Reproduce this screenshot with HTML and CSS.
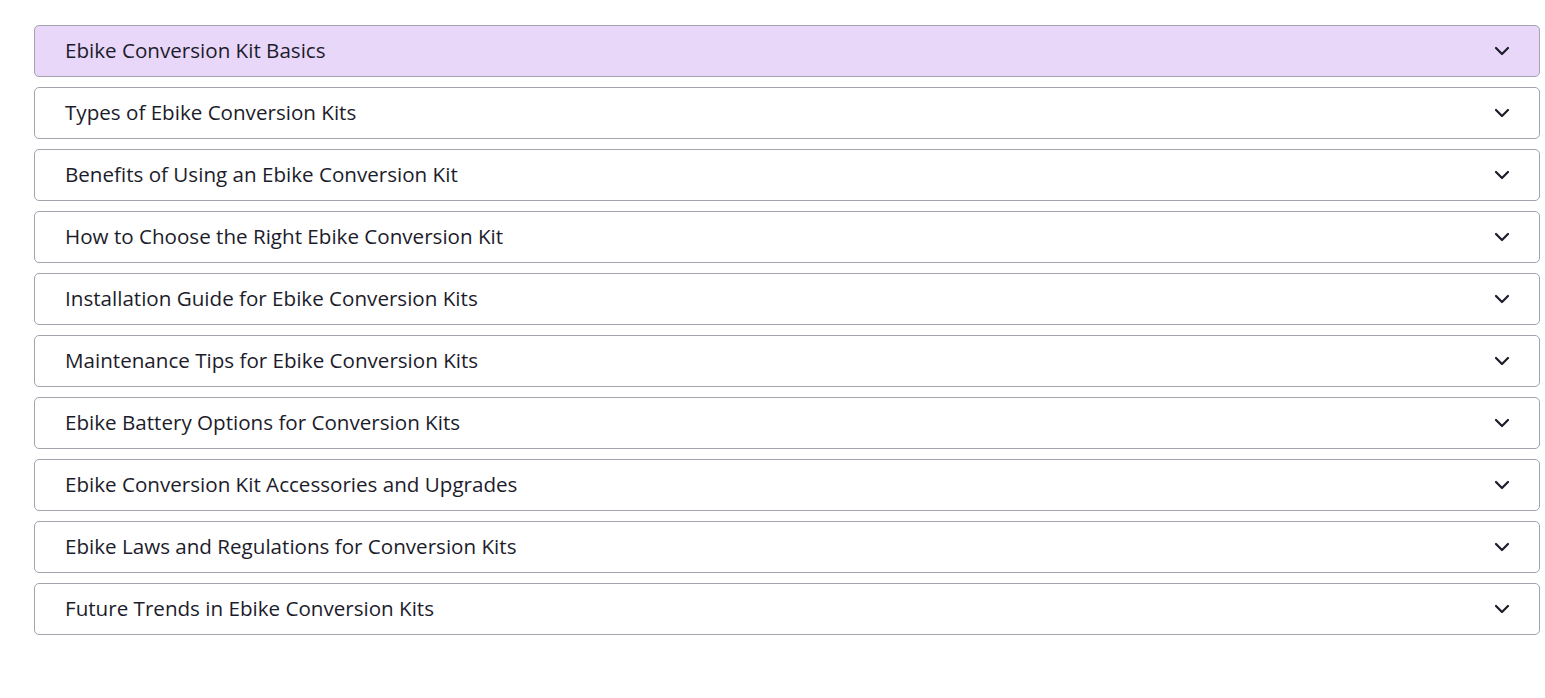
FILE: index.html
```html
<!DOCTYPE html>
<html>
<head>
<meta charset="utf-8">
<link rel="stylesheet" href="styles.css">
</head>
<body>
<div class="accordion">
  <div class="item active"><span class="title">Ebike Conversion Kit Basics</span><svg class="chev" viewBox="0 0 16 16"><path d="M2 5l6 6 6-6"/></svg></div>
  <div class="item"><span class="title">Types of Ebike Conversion Kits</span><svg class="chev" viewBox="0 0 16 16"><path d="M2 5l6 6 6-6"/></svg></div>
  <div class="item"><span class="title">Benefits of Using an Ebike Conversion Kit</span><svg class="chev" viewBox="0 0 16 16"><path d="M2 5l6 6 6-6"/></svg></div>
  <div class="item"><span class="title">How to Choose the Right Ebike Conversion Kit</span><svg class="chev" viewBox="0 0 16 16"><path d="M2 5l6 6 6-6"/></svg></div>
  <div class="item"><span class="title">Installation Guide for Ebike Conversion Kits</span><svg class="chev" viewBox="0 0 16 16"><path d="M2 5l6 6 6-6"/></svg></div>
  <div class="item"><span class="title">Maintenance Tips for Ebike Conversion Kits</span><svg class="chev" viewBox="0 0 16 16"><path d="M2 5l6 6 6-6"/></svg></div>
  <div class="item"><span class="title">Ebike Battery Options for Conversion Kits</span><svg class="chev" viewBox="0 0 16 16"><path d="M2 5l6 6 6-6"/></svg></div>
  <div class="item"><span class="title">Ebike Conversion Kit Accessories and Upgrades</span><svg class="chev" viewBox="0 0 16 16"><path d="M2 5l6 6 6-6"/></svg></div>
  <div class="item"><span class="title">Ebike Laws and Regulations for Conversion Kits</span><svg class="chev" viewBox="0 0 16 16"><path d="M2 5l6 6 6-6"/></svg></div>
  <div class="item"><span class="title">Future Trends in Ebike Conversion Kits</span><svg class="chev" viewBox="0 0 16 16"><path d="M2 5l6 6 6-6"/></svg></div>
</div>
</body>
</html>
```
FILE: styles.css
```css
html, body {
  margin: 0;
  padding: 0;
  background: #ffffff;
}
body {
  padding: 25px 5px 0 34px;
  font-family: "Open Sans", "Noto Sans", sans-serif;
}
.accordion {
  display: flex;
  flex-direction: column;
  gap: 10px;
}
.item {
  display: flex;
  align-items: center;
  justify-content: space-between;
  height: 50px;
  border: 1px solid #a3a3ad;
  border-radius: 5px;
  padding: 0 29px 0 30px;
  background: #ffffff;
  color: #1c1c2b;
  font-size: 20.6px;
}
.item.active {
  background: #e9d7fa;
}
.title {
  position: relative;
  top: -1px;
}
.chev {
  width: 16px;
  height: 16px;
  fill: none;
  stroke: #1c1c2b;
  stroke-width: 2.2;
  stroke-linecap: round;
  stroke-linejoin: round;
}
```
